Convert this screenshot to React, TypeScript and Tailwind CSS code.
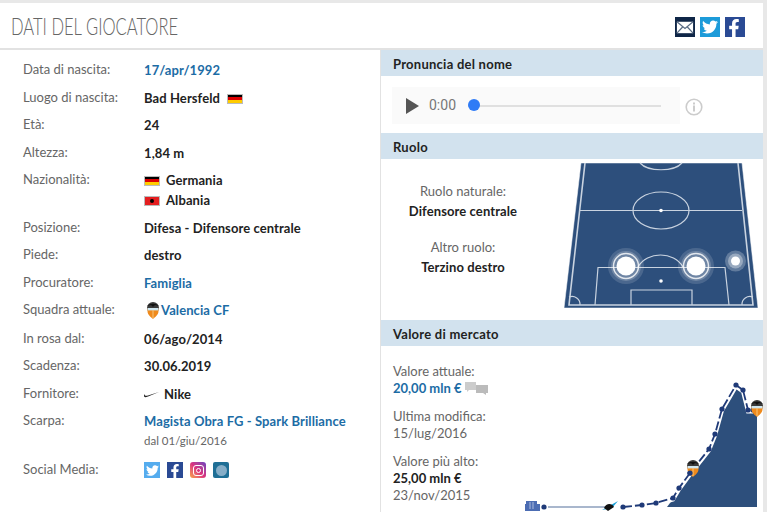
import React from "react";
import { FaTwitter, FaFacebookF } from "react-icons/fa";

const Flag = ({ kind }: { kind: "de" | "al" }) =>
  kind === "de" ? (
    <span className="flex h-[10px] w-[16px] flex-col border border-[#bbb]">
      <span className="flex-1 bg-black" />
      <span className="flex-1 bg-[#d00]" />
      <span className="flex-1 bg-[#fc0]" />
    </span>
  ) : (
    <span className="flex h-[10px] w-[16px] items-center justify-center border border-[#bbb] bg-[#e41e20]">
      <span className="h-[4px] w-[4px] rounded-full bg-black" />
    </span>
  );

const Crest = ({ x, y, s = 1 }: { x: number; y: number; s?: number }) => (
  <g transform={`translate(${x} ${y}) scale(${s})`}>
    <circle cx="0" cy="-2" r="6" fill="#3a3a3a" />
    <path d="M-6 -4 C-3 -7 3 -7 6 -4 C3 -5 1 -5 0 -3 C-1 -5 -3 -5 -6 -4 Z" fill="#111" />
    <path d="M-5.5 -1.5 H5.5 V1 C5.5 5 2 7 0 9 C-2 7 -5.5 5 -5.5 1 Z" fill="#ef8a1c" />
    <rect x="-5.5" y="-2" width="11" height="2.4" fill="#cfe6ef" />
    <path d="M0 0 V8" stroke="#f7c57a" strokeWidth="1" />
  </g>
);

const Row = ({ label, h, children }: { label: string; h: string; children: React.ReactNode }) => (
  <div className={`flex ${h}`}>
    <div className="w-[121px] shrink-0 leading-[17px] text-[#666]">{label}</div>
    <div className="min-w-0 flex-1 pt-[1px] font-bold leading-[17px] tracking-[0.09px] text-[#222]">{children}</div>
  </div>
);

const Link = ({ children }: { children: React.ReactNode }) => (
  <span className="font-bold text-[#1c6ca5]">{children}</span>
);

const Band = ({ children }: { children: React.ReactNode }) => (
  <div className="flex h-[26px] items-center bg-[#d2e2ee] pl-[12px] pt-[3px] text-[13px] font-bold tracking-[0.25px] text-[#222]">{children}</div>
);

const pts: [number, number][] = [
  [623, 507], [642, 505], [656, 503], [673, 498], [679, 488], [690, 473],
  [709, 449], [715, 434], [722, 409], [736, 385], [743, 390], [748, 410], [753, 410],
];
const line = pts.map((p) => p.join(",")).join(" ");

export default function App() {
  return (
    <div className="h-[512px] w-[767px] overflow-hidden bg-[#e8e8e8] pr-[4px] pt-[3px] font-['Lato',sans-serif] text-[13px]">
      <div className="flex h-[45px] items-center justify-between bg-white pl-[11px] pr-[18px]">
        <h1 className="mt-[2px] origin-left scale-x-[0.72] whitespace-nowrap text-[23px] font-light leading-none text-[#666]">DATI DEL GIOCATORE</h1>
        <div className="mt-[3px] flex items-center gap-[5px]">
          <svg width="20" height="20" viewBox="0 0 21 21" aria-label="Email">
            <rect width="21" height="21" fill="#0f2647" />
            <rect x="2" y="5" width="17" height="12" fill="#fff" />
            <path d="M2 5 L10.5 12 L19 5 M2 17 L8 10.5 M19 17 L13 10.5" fill="none" stroke="#5a6d85" strokeWidth="1.3" />
          </svg>
          <span className="flex h-[20px] w-[20px] items-center justify-center bg-[#1d9bd9] text-[16px] text-white"><FaTwitter /></span>
          <span className="flex h-[20px] w-[20px] items-end justify-end bg-[#2a4a94] pr-[2px] text-[18px] text-white"><FaFacebookF /></span>
        </div>
      </div>
      <div className="h-[2px] bg-[#e2e2e2]" />
      <div className="flex h-[462px]">
        <div className="w-[381px] shrink-0 border-r border-[#e2e2e2] bg-white pl-[23px] pt-[11px]">
          <Row label="Data di nascita:" h="h-[28px]"><Link>17/apr/1992</Link></Row>
          <Row label="Luogo di nascita:" h="h-[27px]">
            <span className="flex items-center gap-[7px]">Bad Hersfeld <Flag kind="de" /></span>
          </Row>
          <Row label="Età:" h="h-[28px]">24</Row>
          <Row label="Altezza:" h="h-[27px]">1,84 m</Row>
          <Row label="Nazionalità:" h="h-[48px]">
            <span className="flex items-center gap-[6px]"><Flag kind="de" /> Germania</span>
            <span className="mt-[3px] flex items-center gap-[6px]"><Flag kind="al" /> Albania</span>
          </Row>
          <Row label="Posizione:" h="h-[27px]">Difesa - Difensore centrale</Row>
          <Row label="Piede:" h="h-[28px]">destro</Row>
          <Row label="Procuratore:" h="h-[27px]"><Link>Famiglia</Link></Row>
          <Row label="Squadra attuale:" h="h-[29px]">
            <span className="flex items-center gap-[1px] pl-[2px]">
              <svg width="14" height="17" viewBox="-7 -8 14 17"><Crest x={0} y={0} /></svg>
              <Link>Valencia CF</Link>
            </span>
          </Row>
          <Row label="In rosa dal:" h="h-[27px]">06/ago/2014</Row>
          <Row label="Scadenza:" h="h-[28px]">30.06.2019</Row>
          <Row label="Fornitore:" h="h-[27px]">
            <span className="flex items-center gap-[5px]">
              <svg width="15" height="6" viewBox="0 0 30 12"><path d="M30 0 L8 9 C3 11 0 11 0 8 C0 7 1 5 2 4 C1 8 4 8 8 7 Z" fill="#222" /></svg>
              Nike
            </span>
          </Row>
          <Row label="Scarpa:" h="h-[49px]">
            <Link>Magista Obra FG - Spark Brilliance</Link>
            <div className="mt-[2px] text-[11.5px] font-normal tracking-normal text-[#666]">dal 01/giu/2016</div>
          </Row>
          <Row label="Social Media:" h="h-[20px]">
            <span className="flex items-center gap-[7px]">
              <span className="flex h-[16px] w-[16px] items-center justify-center bg-[#55acee] text-[13px] text-white"><FaTwitter /></span>
              <span className="flex h-[16px] w-[16px] items-end justify-end bg-[#2a4a94] pr-[1px] text-[14px] text-white"><FaFacebookF /></span>
              <span className="flex h-[16px] w-[16px] items-center justify-center rounded-[3px] bg-gradient-to-tr from-[#f9a13a] via-[#d92e7f] to-[#6a3bc0]">
                <span className="flex h-[11px] w-[11px] items-center justify-center rounded-[3px] border border-white">
                  <span className="h-[5px] w-[5px] rounded-full border border-white" />
                </span>
              </span>
              <span className="flex h-[16px] w-[16px] items-center justify-center rounded-[2px] bg-[#1f6f96]">
                <span className="h-[11px] w-[11px] rounded-full bg-[#86aec8]" />
              </span>
            </span>
          </Row>
        </div>
        <div className="min-w-0 flex-1 bg-white">
          <Band>Pronuncia del nome</Band>
          <div className="flex h-[57px] items-start pl-[11px] pt-[11px]">
            <div className="flex h-[37px] w-[288px] items-center bg-[#fafafa] pl-[14px]">
              <svg width="13" height="16" viewBox="0 0 13 16"><path d="M0 0 L13 8 L0 16 Z" fill="#555" /></svg>
              <span className="ml-[10px] font-['Roboto',sans-serif] text-[14px] text-[#777]">0:00</span>
              <div className="relative ml-[12px] h-[2px] w-[193px] bg-[#e0e0e0]">
                <span className="absolute -top-[6px] left-0 h-[12px] w-[12px] rounded-full bg-[#2f7bf6]" />
              </div>
            </div>
            <svg className="ml-[5px] mt-[11px]" width="18" height="18" viewBox="0 0 18 18">
              <circle cx="9" cy="9" r="7.8" fill="none" stroke="#ccc" strokeWidth="1.6" />
              <rect x="8" y="7.5" width="2" height="6" fill="#ccc" />
              <rect x="8" y="4.5" width="2" height="2" fill="#ccc" />
            </svg>
          </div>
          <Band>Ruolo</Band>
          <div className="flex h-[161px]">
            <div className="w-[164px] shrink-0 pt-[22px] text-center leading-[20px]">
              <div className="text-[#666]">Ruolo naturale:</div>
              <div className="font-bold tracking-[0.1px] text-[#222]">Difensore centrale</div>
              <div className="mt-[16px] text-[#666]">Altro ruolo:</div>
              <div className="font-bold tracking-[0.1px] text-[#222]">Terzino destro</div>
            </div>
            <svg className="ml-[15px] mt-[2px] shrink-0" width="203" height="150" viewBox="560 160 203 150">
              <path d="M581 162 H742 L758 307 H564 Z" fill="#2d4f7c" stroke="#fff" strokeWidth="0.5" />
              <g fill="none" stroke="#c9d3e0" strokeWidth="1.2">
                <path d="M585 162 L569 304 H753 L738 162" strokeWidth="1.6" />
                <path d="M580 209.5 H742" />
                <ellipse cx="661" cy="209.5" rx="28" ry="18.5" />
                <path d="M640 162 C648 171 674 171 682 162" />
                <path d="M595 304 L598 266.5 H725 L729 304" />
                <path d="M631 304 V289 H692 V304" />
                <path d="M638 266 C647 250 674 250 683 266" />
                <path d="M569 296 A8 8 0 0 1 580 304 M753 296 A8 8 0 0 0 742 304" />
              </g>
              <circle cx="661" cy="209.5" r="1.8" fill="#fff" />
              <circle cx="661" cy="280" r="1.8" fill="#fff" />
              {[[626, 265], [696, 265]].map(([x, y]) => (
                <g key={x}>
                  <circle cx={x} cy={y} r="18" fill="#fff" fillOpacity="0.14" />
                  <circle cx={x} cy={y} r="15" fill="#fff" fillOpacity="0.2" />
                  <circle cx={x} cy={y} r="12.5" fill="none" stroke="#fff" strokeOpacity="0.8" strokeWidth="1.5" />
                  <circle cx={x} cy={y} r="9.5" fill="#fff" />
                </g>
              ))}
              <circle cx="735.5" cy="260" r="10.5" fill="#fff" fillOpacity="0.25" />
              <circle cx="735.5" cy="260" r="7.5" fill="#fff" fillOpacity="0.35" />
              <circle cx="735.5" cy="260" r="4.5" fill="#fff" />
            </svg>
          </div>
          <Band>Valore di mercato</Band>
          <div className="flex h-[166px]">
            <div className="w-[139px] shrink-0 pl-[12px] pt-[17px] leading-[17px]">
              <div className="text-[#666]">Valore attuale:</div>
              <div className="flex items-center gap-[3px]">
                <Link>20,00 mln €</Link>
                <svg width="24" height="13" viewBox="0 0 24 13">
                  <path d="M0 0 H11 V8 H4 L2 10 V8 H0 Z" fill="#ccc" />
                  <path d="M11 3 H23 V11 H21 V13 L18 11 H11 Z" fill="#bbb" />
                </svg>
              </div>
              <div className="mt-[11px] text-[#666]">Ultima modifica:</div>
              <div className="text-[#666]">15/lug/2016</div>
              <div className="mt-[11px] text-[#666]">Valore più alto:</div>
              <div className="font-bold text-[#222]">25,00 mln €</div>
              <div className="text-[#666]">23/nov/2015</div>
            </div>
            <svg className="shrink-0" width="243" height="166" viewBox="520 346 243 166">
              <path d="M667 507 L673 499 L679 490 L690 475 L709 451 L715 436 L722 411 L736 388 L743 393 L748 412 L757 412 V507 Z" fill="#2d4f7c" />
              <polyline points={line} fill="none" stroke="#fff" strokeWidth="4" transform="translate(0 1.5)" />
              <polyline points={line} fill="none" stroke="#1f3a78" strokeWidth="1.8" strokeDasharray="9 3" />
              <line x1="548" y1="507" x2="606" y2="507" stroke="#8d9fbd" strokeWidth="1.6" />
              <circle cx="544" cy="507" r="2.6" fill="#1f3a78" />
              {pts.map(([x, y]) => (
                <circle key={x} cx={x} cy={y} r="2.6" fill="#1f3a78" />
              ))}
              <path d="M525 504 H526 V501 H537 V504 H540 V511 H525 Z" fill="#4c6db3" />
              <path d="M530 502 V509 M533 502 V509" stroke="#c5d1e8" strokeWidth="0.8" />
              <path d="M602 510 L618 501 L612 508 Z" fill="#1aa0d8" />
              <path d="M604 508 C606 503 612 503 614 507 L608 511 Z" fill="#111" />
              <Crest x={693} y={468} />
              <Crest x={757} y={408} />
              <circle cx="690" cy="473" r="2.6" fill="#1f3a78" />
            </svg>
          </div>
        </div>
      </div>
    </div>
  );
}
